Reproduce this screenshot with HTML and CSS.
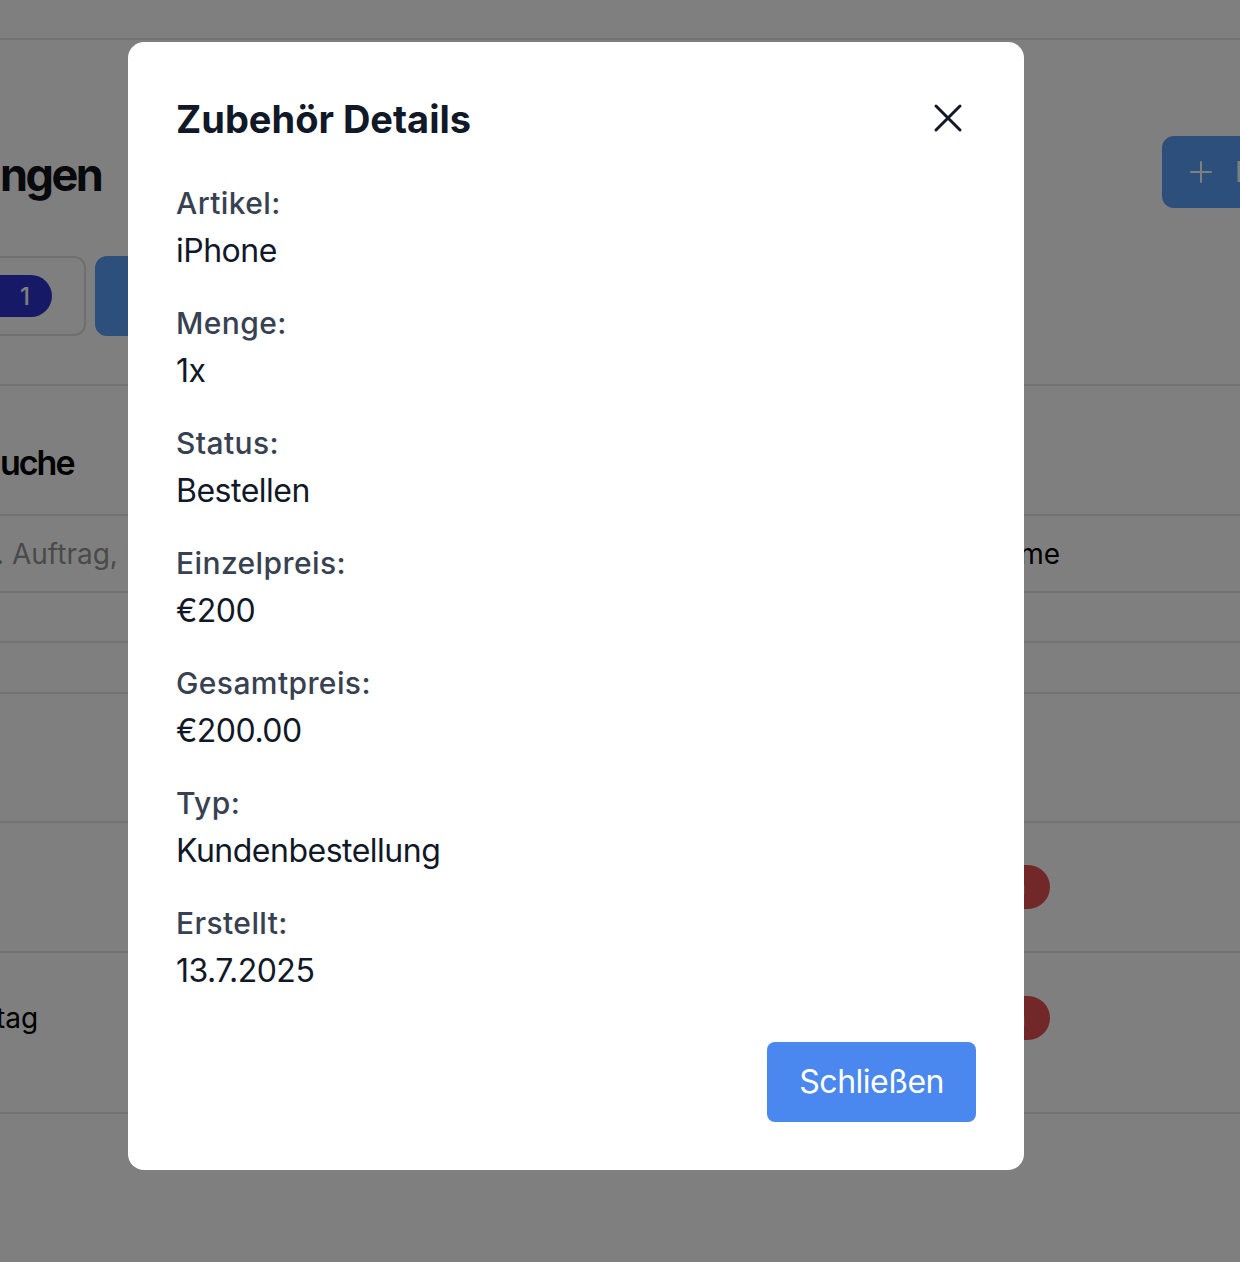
FILE: index.html
```html
<!DOCTYPE html>
<html lang="de">
<head>
<meta charset="utf-8">
<title>Zubehör Details</title>
<link rel="stylesheet" href="styles.css">
</head>
<body>
<div class="page">
  <div class="topbar"></div>
  <div class="sec1">
    <div class="title-row">
      <h1 class="page-title">ngen</h1>
      <div class="add-btn">
        <svg class="plus" viewBox="0 0 22 22" width="22" height="22" fill="none" stroke="#fff" stroke-width="2" stroke-linecap="round"><path d="M11 1v20M1 11h20"/></svg>
        <span class="add-label">Erstellen</span>
      </div>
    </div>
    <div class="filter-row">
      <div class="tab-box"><span class="count">1</span></div>
      <div class="tab-active"></div>
    </div>
  </div>
  <div class="search-head"><h2 class="search-title">uche</h2></div>
  <div class="search-row">
    <span class="placeholder">. Auftrag, Kunde</span>
    <span class="select-text">Name</span>
  </div>
  <div class="row r1"></div>
  <div class="row r2"></div>
  <div class="row r3"></div>
  <div class="row r4"><span class="del">Löschen</span></div>
  <div class="row r5"><span class="cell">tag</span><span class="del">Löschen</span></div>
</div>

<div class="overlay">
  <div class="modal">
    <div class="modal-head">
      <h3 class="modal-title">Zubehör Details</h3>
      <button class="close" type="button" aria-label="Schließen">
        <svg viewBox="0 0 24 24" width="48" height="48" fill="none" stroke="#111827" stroke-width="1.5" stroke-linecap="round" stroke-linejoin="round"><path d="M6 18L18 6M6 6l12 12"/></svg>
      </button>
    </div>
    <div class="fields">
      <div class="field"><div class="label">Artikel:</div><div class="value">iPhone</div></div>
      <div class="field"><div class="label">Menge:</div><div class="value">1x</div></div>
      <div class="field"><div class="label">Status:</div><div class="value">Bestellen</div></div>
      <div class="field"><div class="label">Einzelpreis:</div><div class="value">€200</div></div>
      <div class="field"><div class="label">Gesamtpreis:</div><div class="value">€200.00</div></div>
      <div class="field"><div class="label">Typ:</div><div class="value">Kundenbestellung</div></div>
      <div class="field"><div class="label">Erstellt:</div><div class="value">13.7.2025</div></div>
    </div>
    <div class="modal-foot">
      <button class="primary" type="button">Schließen</button>
    </div>
  </div>
</div>
</body>
</html>
```

FILE: styles.css
```css
* { box-sizing: border-box; }
html, body { margin: 0; padding: 0; }
body {
  font-family: Inter, "Noto Sans", "Liberation Sans", sans-serif;
  background: #ffffff;
  color: #111827;
}
.page {
  width: 1240px;
  height: 1262px;
  overflow: hidden;
}
.topbar {
  height: 40px;
  border-bottom: 2px solid #e5e5e5;
}
.sec1 {
  height: 346px;
  border-bottom: 2px solid #e5e5e5;
  padding-top: 96px;
}
.title-row {
  height: 72px;
  display: flex;
  justify-content: space-between;
  align-items: center;
}
.page-title {
  margin: 6px 0 0 0;
  font-size: 45px;
  font-weight: 700;
  line-height: 60px;
  letter-spacing: -2.5px;
  color: #101218;
}
.add-btn {
  width: 78px;
  height: 72px;
  flex-shrink: 0;
  overflow: hidden;
  background: #589ef8;
  border-radius: 12px 0 0 12px;
  display: flex;
  align-items: center;
  gap: 23px;
  padding-left: 28px;
  color: #fff;
  font-size: 28px;
  white-space: nowrap;
}
.plus { flex-shrink: 0; display: block; }
.add-label { flex-shrink: 0; }
.filter-row {
  margin-top: 48px;
  height: 80px;
  display: flex;
  gap: 9px;
}
.tab-box {
  width: 86px;
  height: 80px;
  border: 2px solid #dedede;
  border-left: none;
  border-radius: 0 12px 12px 0;
  display: flex;
  align-items: center;
  padding-right: 32px;
  justify-content: flex-end;
}
.count {
  width: 66px;
  height: 42px;
  background: #2c34cc;
  color: #fff;
  border-radius: 0 21px 21px 0;
  display: flex;
  align-items: center;
  justify-content: flex-end;
  padding-right: 22px;
  font-size: 24px;
  font-weight: 500;
}
.tab-active {
  width: 300px;
  height: 80px;
  background: #589ef8;
  border-radius: 12px;
}
.search-head {
  height: 130px;
  border-bottom: 2px solid #e5e5e5;
  padding-top: 53px;
}
.search-title {
  margin: 0;
  font-size: 34px;
  font-weight: 600;
  line-height: 48px;
  letter-spacing: -2px;
  color: #000;
}
.search-row {
  height: 77px;
  border-bottom: 2px solid #e5e5e5;
  display: flex;
  align-items: center;
  justify-content: space-between;
  padding-right: 180px;
  font-size: 28px;
}
.placeholder { color: #949494; margin-left: -4px; }
.select-text { color: #000; }
.row {
  border-bottom: 2px solid #e5e5e5;
  display: flex;
  align-items: center;
  justify-content: space-between;
  padding-right: 190px;
}
.r1 { height: 50px; }
.r2 { height: 51px; }
.r3 { height: 129px; }
.r4 { height: 130px; justify-content: flex-end; }
.r5 { height: 161px; align-items: flex-start; padding-top: 43px; }
.cell { font-size: 28px; line-height: 44px; color: #000; margin-left: -4px; }
.del {
  height: 44px;
  padding: 0 24px;
  border-radius: 22px;
  background: #e45050;
  color: #fff;
  font-size: 24px;
  line-height: 44px;
}

.overlay {
  position: fixed;
  inset: 0;
  background: rgba(0, 0, 0, 0.5);
  padding: 42px 0 0 128px;
}
.modal {
  width: 896px;
  background: #ffffff;
  border-radius: 16px;
  padding: 48px;
}
.modal-head {
  height: 56px;
  display: flex;
  justify-content: space-between;
  align-items: center;
  margin-bottom: 37px;
}
.modal-title {
  margin: 2px 0 0 0;
  font-size: 38px;
  font-weight: 700;
  line-height: 56px;
  color: #111827;
}
.close {
  border: none;
  background: none;
  padding: 0;
  margin-right: 4px;
  width: 48px;
  height: 48px;
  display: block;
}
.close svg { display: block; }
.fields {
  display: flex;
  flex-direction: column;
  gap: 28px;
}
.label {
  font-size: 30px;
  line-height: 40px;
  font-weight: 500;
  letter-spacing: 0.4px;
  color: #374151;
}
.value {
  margin-top: 4px;
  font-size: 32px;
  line-height: 48px;
  letter-spacing: -0.5px;
  color: #111827;
}
.modal-foot {
  margin-top: 47px;
  display: flex;
  justify-content: flex-end;
}
.primary {
  border: none;
  background: #4a87ef;
  color: #fff;
  font-family: inherit;
  font-size: 32px;
  line-height: 48px;
  letter-spacing: -0.5px;
  padding: 16px 32px;
  border-radius: 8px;
}
```
